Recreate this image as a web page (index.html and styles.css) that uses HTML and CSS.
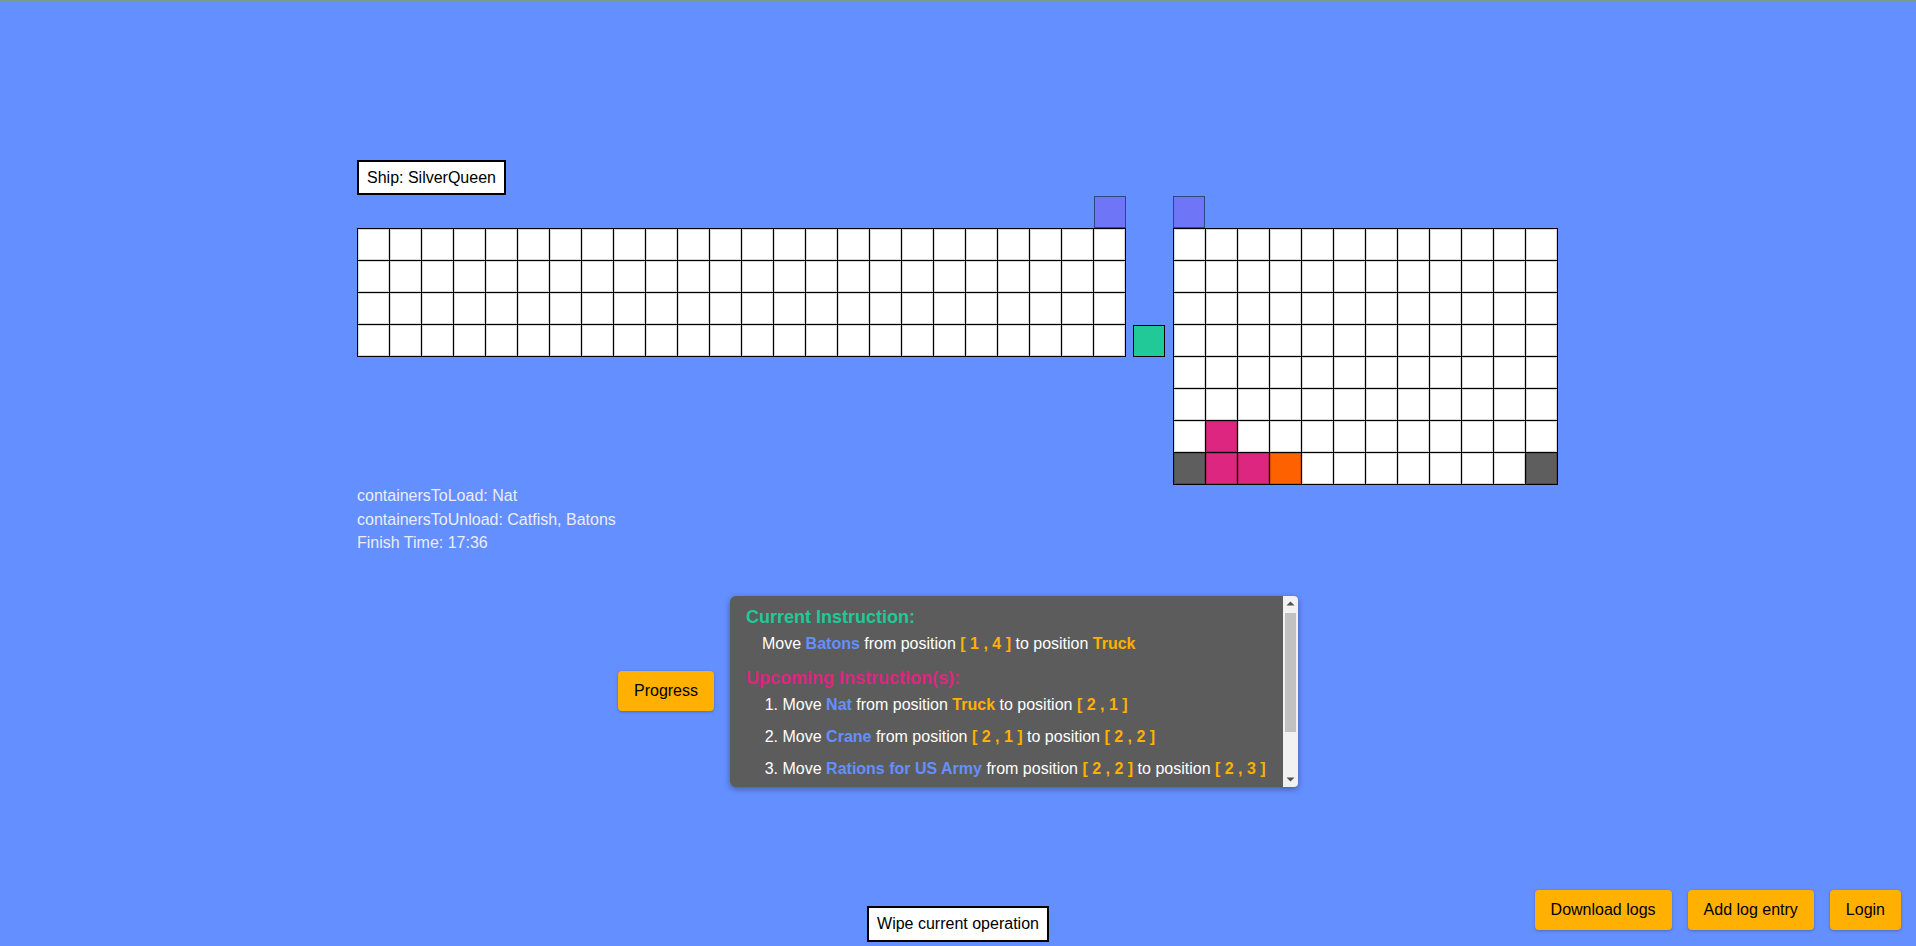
FILE: index.html
```html
<!DOCTYPE html>
<html lang="en">
<head>
<meta charset="utf-8">
<title>Ship Operation</title>
<link rel="stylesheet" href="styles.css">
</head>
<body>
<main class="page">
  <div class="ship-label">Ship: SilverQueen</div>
  <div class="yard">
    <section class="ship">
      <div class="crane-row crane-row-end"><div class="crane"></div></div>
      <div class="grid grid-ship">
        <div class="c"></div><div class="c"></div><div class="c"></div><div class="c"></div><div class="c"></div><div class="c"></div><div class="c"></div><div class="c"></div><div class="c"></div><div class="c"></div><div class="c"></div><div class="c"></div><div class="c"></div><div class="c"></div><div class="c"></div><div class="c"></div><div class="c"></div><div class="c"></div><div class="c"></div><div class="c"></div><div class="c"></div><div class="c"></div><div class="c"></div><div class="c"></div>
        <div class="c"></div><div class="c"></div><div class="c"></div><div class="c"></div><div class="c"></div><div class="c"></div><div class="c"></div><div class="c"></div><div class="c"></div><div class="c"></div><div class="c"></div><div class="c"></div><div class="c"></div><div class="c"></div><div class="c"></div><div class="c"></div><div class="c"></div><div class="c"></div><div class="c"></div><div class="c"></div><div class="c"></div><div class="c"></div><div class="c"></div><div class="c"></div>
        <div class="c"></div><div class="c"></div><div class="c"></div><div class="c"></div><div class="c"></div><div class="c"></div><div class="c"></div><div class="c"></div><div class="c"></div><div class="c"></div><div class="c"></div><div class="c"></div><div class="c"></div><div class="c"></div><div class="c"></div><div class="c"></div><div class="c"></div><div class="c"></div><div class="c"></div><div class="c"></div><div class="c"></div><div class="c"></div><div class="c"></div><div class="c"></div>
        <div class="c"></div><div class="c"></div><div class="c"></div><div class="c"></div><div class="c"></div><div class="c"></div><div class="c"></div><div class="c"></div><div class="c"></div><div class="c"></div><div class="c"></div><div class="c"></div><div class="c"></div><div class="c"></div><div class="c"></div><div class="c"></div><div class="c"></div><div class="c"></div><div class="c"></div><div class="c"></div><div class="c"></div><div class="c"></div><div class="c"></div><div class="c"></div>
      </div>
    </section>
    <div class="truck-col"><div class="truck"></div></div>
    <section class="dock">
      <div class="crane-row"><div class="crane"></div></div>
      <div class="grid grid-dock">
        <div class="c"></div><div class="c"></div><div class="c"></div><div class="c"></div><div class="c"></div><div class="c"></div><div class="c"></div><div class="c"></div><div class="c"></div><div class="c"></div><div class="c"></div><div class="c"></div>
        <div class="c"></div><div class="c"></div><div class="c"></div><div class="c"></div><div class="c"></div><div class="c"></div><div class="c"></div><div class="c"></div><div class="c"></div><div class="c"></div><div class="c"></div><div class="c"></div>
        <div class="c"></div><div class="c"></div><div class="c"></div><div class="c"></div><div class="c"></div><div class="c"></div><div class="c"></div><div class="c"></div><div class="c"></div><div class="c"></div><div class="c"></div><div class="c"></div>
        <div class="c"></div><div class="c"></div><div class="c"></div><div class="c"></div><div class="c"></div><div class="c"></div><div class="c"></div><div class="c"></div><div class="c"></div><div class="c"></div><div class="c"></div><div class="c"></div>
        <div class="c"></div><div class="c"></div><div class="c"></div><div class="c"></div><div class="c"></div><div class="c"></div><div class="c"></div><div class="c"></div><div class="c"></div><div class="c"></div><div class="c"></div><div class="c"></div>
        <div class="c"></div><div class="c"></div><div class="c"></div><div class="c"></div><div class="c"></div><div class="c"></div><div class="c"></div><div class="c"></div><div class="c"></div><div class="c"></div><div class="c"></div><div class="c"></div>
        <div class="c"></div><div class="m"></div><div class="c"></div><div class="c"></div><div class="c"></div><div class="c"></div><div class="c"></div><div class="c"></div><div class="c"></div><div class="c"></div><div class="c"></div><div class="c"></div>
        <div class="g"></div><div class="m"></div><div class="m"></div><div class="o"></div><div class="c"></div><div class="c"></div><div class="c"></div><div class="c"></div><div class="c"></div><div class="c"></div><div class="c"></div><div class="g"></div>
      </div>
    </section>
  </div>

  <div class="info">
    <div>containersToLoad: Nat</div>
    <div>containersToUnload: Catfish, Batons</div>
    <div>Finish Time: 17:36</div>
  </div>

  <div class="controls">
    <button class="btn">Progress</button>
    <div class="panel">
      <div class="panel-body">
        <h3 class="h-current">Current Instruction:</h3>
        <p class="current">Move <b class="name">Batons</b> from position <b class="pos">[ 1 , 4 ]</b> to position <b class="pos">Truck</b></p>
        <h3 class="h-upcoming">Upcoming Instruction(s):</h3>
        <ol class="upcoming">
          <li>Move <b class="name">Nat</b> from position <b class="pos">Truck</b> to position <b class="pos">[ 2 , 1 ]</b></li>
          <li>Move <b class="name">Crane</b> from position <b class="pos">[ 2 , 1 ]</b> to position <b class="pos">[ 2 , 2 ]</b></li>
          <li>Move <b class="name">Rations for US Army</b> from position <b class="pos">[ 2 , 2 ]</b> to position <b class="pos">[ 2 , 3 ]</b></li>
        </ol>
      </div>
      <div class="scrollbar" aria-hidden="true">
        <div class="sb-btn"><svg width="15" height="15" viewBox="0 0 15 15"><path d="M3.5 9.5 L7.5 5.5 L11.5 9.5 Z" fill="#505050"/></svg></div>
        <div class="sb-track"><div class="sb-thumb"></div></div>
        <div class="sb-btn"><svg width="15" height="15" viewBox="0 0 15 15"><path d="M3.5 5.5 L7.5 9.5 L11.5 5.5 Z" fill="#505050"/></svg></div>
      </div>
    </div>
  </div>
</main>

<footer class="footer">
  <div></div>
  <button class="wipe">Wipe current operation</button>
  <div class="actions">
    <button class="btn">Download logs</button>
    <button class="btn">Add log entry</button>
    <button class="btn">Login</button>
  </div>
</footer>
</body>
</html>
```
FILE: styles.css
```css
* { box-sizing: border-box; }

html, body { margin: 0; padding: 0; }

body {
  background: #648FFF;
  font-family: "Liberation Sans", Arial, sans-serif;
  font-size: 16px;
  color: #000;
  border-top: 1px solid #7d9a90;
  min-height: 100vh;
  display: flex;
  flex-direction: column;
}

.page {
  width: 1202px;
  margin: 0 auto;
  padding-top: 159px;
  flex: 1;
}

.ship-label {
  width: max-content;
  height: 35px;
  line-height: 31px;
  padding: 0 8px;
  border: 2px solid #000;
  background: #fff;
  margin-bottom: 1px;
}

.yard {
  display: flex;
  align-items: flex-start;
}

.ship { width: 769px; }
.dock { width: 385px; }

.crane-row {
  height: 32px;
  display: flex;
}
.crane-row-end { justify-content: flex-end; }

.crane {
  width: 32px;
  height: 32px;
  background: #785EF0;
  border: 1px solid #000;
  opacity: 0.5;
}

.grid {
  display: grid;
  gap: 1px;
  background: #000;
  border: 1px solid #000;
  grid-auto-rows: 31px;
}
.grid-ship { grid-template-columns: repeat(24, 31px); }
.grid-dock { grid-template-columns: repeat(12, 31px); }

.grid > div { box-shadow: inset 0 0 0 1px rgba(0, 0, 0, 0.16); }

.c { background: #fff; }
.m { background: #DC267F; }
.o { background: #FE6100; }
.g { background: #5e5e5e; }

.truck-col {
  width: 32px;
  height: 161px;
  margin: 0 8px 0 7px;
  display: flex;
  align-items: flex-end;
}
.truck {
  width: 32px;
  height: 32px;
  background: #20c997;
  border: 1px solid #000;
}

.info {
  margin-top: -1px;
  color: #ececfc;
  line-height: 23.6px;
}

.controls {
  margin-top: 41px;
  display: flex;
  justify-content: center;
  align-items: center;
  gap: 16px;
}

.btn {
  background: #FFB000;
  border: 0;
  border-radius: 4px;
  height: 40px;
  padding: 0 16px;
  font-family: "Liberation Sans", Arial, sans-serif;
  font-size: 16px;
  color: #000;
  box-shadow: 0 1px 3px rgba(0, 0, 0, 0.25);
}

.panel {
  width: 568px;
  height: 191px;
  display: flex;
  overflow: hidden;
  background: #5c5c5c;
  border-radius: 6px 4px 4px 6px;
  box-shadow: 0 2px 6px rgba(0, 0, 0, 0.35);
  color: #fff;
}

.panel-body {
  flex: 1;
  min-width: 0;
  overflow: hidden;
  padding: 11px 4px 0 16px;
}

.scrollbar {
  width: 15px;
  flex: none;
  display: flex;
  flex-direction: column;
  background: #f1f1f1;
}
.sb-btn { height: 15px; flex: none; }
.sb-btn svg { display: block; }
.sb-track {
  flex: 1;
  padding: 2px 2px 0;
}
.sb-thumb {
  height: 119px;
  background: #c1c1c1;
}

.panel h3 {
  margin: 0;
  font-size: 18px;
  font-weight: bold;
}
.h-current { color: #20c997; }
.panel .h-upcoming { color: #DC267F; margin-top: 8px; }

.current {
  margin: 0;
  padding-left: 16px;
  line-height: 32px;
  white-space: nowrap;
}

.upcoming {
  margin: 0;
  padding-left: 36.5px;
}
.upcoming li {
  line-height: 32px;
  white-space: nowrap;
}

.name { color: #648FFF; }
.pos { color: #FFB000; }

.footer {
  display: grid;
  grid-template-columns: 1fr auto 1fr;
  align-items: end;
}

.wipe {
  height: 36px;
  padding: 0 8px;
  background: #fff;
  border: 2px solid #000;
  border-radius: 0;
  font-family: "Liberation Sans", Arial, sans-serif;
  font-size: 16px;
  color: #000;
  margin-bottom: 4px;
}

.actions {
  justify-self: end;
  display: flex;
  gap: 16px;
  margin: 0 15px 16px 0;
}
```
